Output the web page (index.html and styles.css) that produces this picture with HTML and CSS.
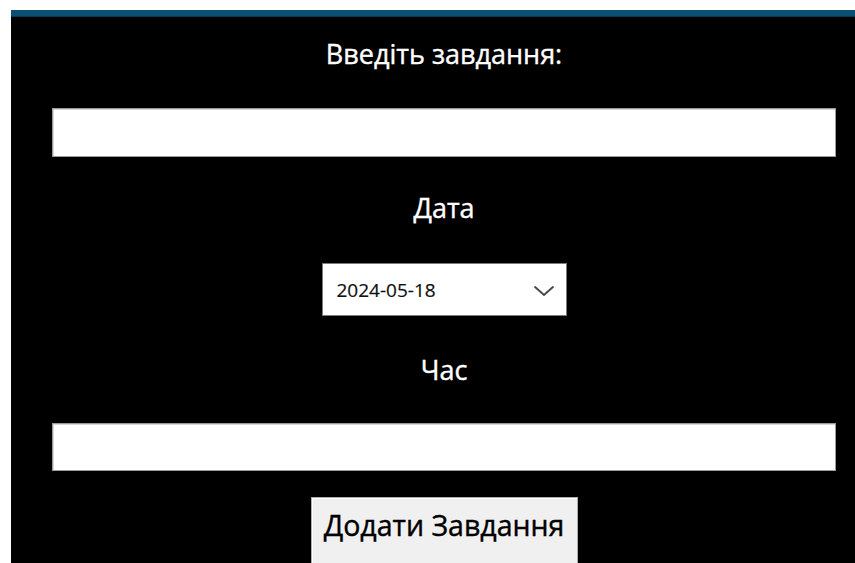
FILE: index.html
```html
<!DOCTYPE html>
<html lang="uk">
<head>
<meta charset="utf-8">
<title>Завдання</title>
<link rel="stylesheet" href="styles.css">
</head>
<body>
<div class="window">
  <div class="form">
    <div class="label label-task">Введіть завдання:</div>
    <div class="entry entry-task"></div>
    <div class="label label-date">Дата</div>
    <div class="combo">
      <span class="combo-value">2024-05-18</span>
      <svg class="chevron" width="22" height="12" viewBox="0 0 22 12" aria-hidden="true">
        <path d="M1.5 1.5 L11 10 L20.5 1.5" fill="none" stroke="#4a4a4a" stroke-width="2"/>
      </svg>
    </div>
    <div class="label label-time">Час</div>
    <div class="entry entry-time"></div>
    <button class="add-btn" type="button">Додати Завдання</button>
  </div>
</div>
</body>
</html>
```

FILE: styles.css
```css
html, body {
  margin: 0;
  padding: 0;
  background: #ffffff;
  overflow: hidden;
  height: 100%;
}

.window {
  margin: 10px 0 0 11px;
  height: 547px;
  overflow: hidden;
  background: #000000;
  border-top: 6px solid #0b4f73;
  box-shadow: inset 0 1px 0 #083a56;
}

.form {
  display: flex;
  flex-direction: column;
  align-items: center;
  padding: 18px 19px 0 41px;
  font-family: "Open Sans", "Noto Sans", sans-serif;
}

.label {
  color: #ffffff;
  font-size: 27px;
  font-weight: 500;
  -webkit-text-stroke: 0.4px #ffffff;
  line-height: 40px;
  height: 40px;
}

.entry {
  align-self: stretch;
  background: #ffffff;
  border: 1px solid #9a9a9a;
  box-shadow: inset 1px 1px 0 #d8d8d8;
}

.entry-task {
  margin-top: 34px;
  height: 47px;
}

.label-date {
  margin-top: 31px;
}

.combo {
  margin-top: 35px;
  width: 218px;
  height: 51px;
  background: #ffffff;
  border: 1px solid #7a7a7a;
  display: flex;
  align-items: center;
  justify-content: space-between;
  padding: 0 11px 0 14px;
}

.combo-value {
  font-size: 19px;
  color: #111111;
  -webkit-text-stroke: 0.2px #111111;
}

.chevron {
  display: block;
  margin-top: 2px;
}

.label-time {
  margin-top: 34px;
}

.entry-time {
  margin-top: 33px;
  height: 46px;
}

.add-btn {
  margin-top: 26px;
  flex: none;
  width: 267px;
  height: 70px;
  padding: 0 0 14px;
  background: #f0f0f0;
  border: 1px solid #adadad;
  box-shadow: inset 1px 1px 0 #ffffff;
  font-family: "Open Sans", "Noto Sans", sans-serif;
  font-size: 28.5px;
  font-weight: 500;
  -webkit-text-stroke: 0.4px #000000;
  color: #000000;
}
```
